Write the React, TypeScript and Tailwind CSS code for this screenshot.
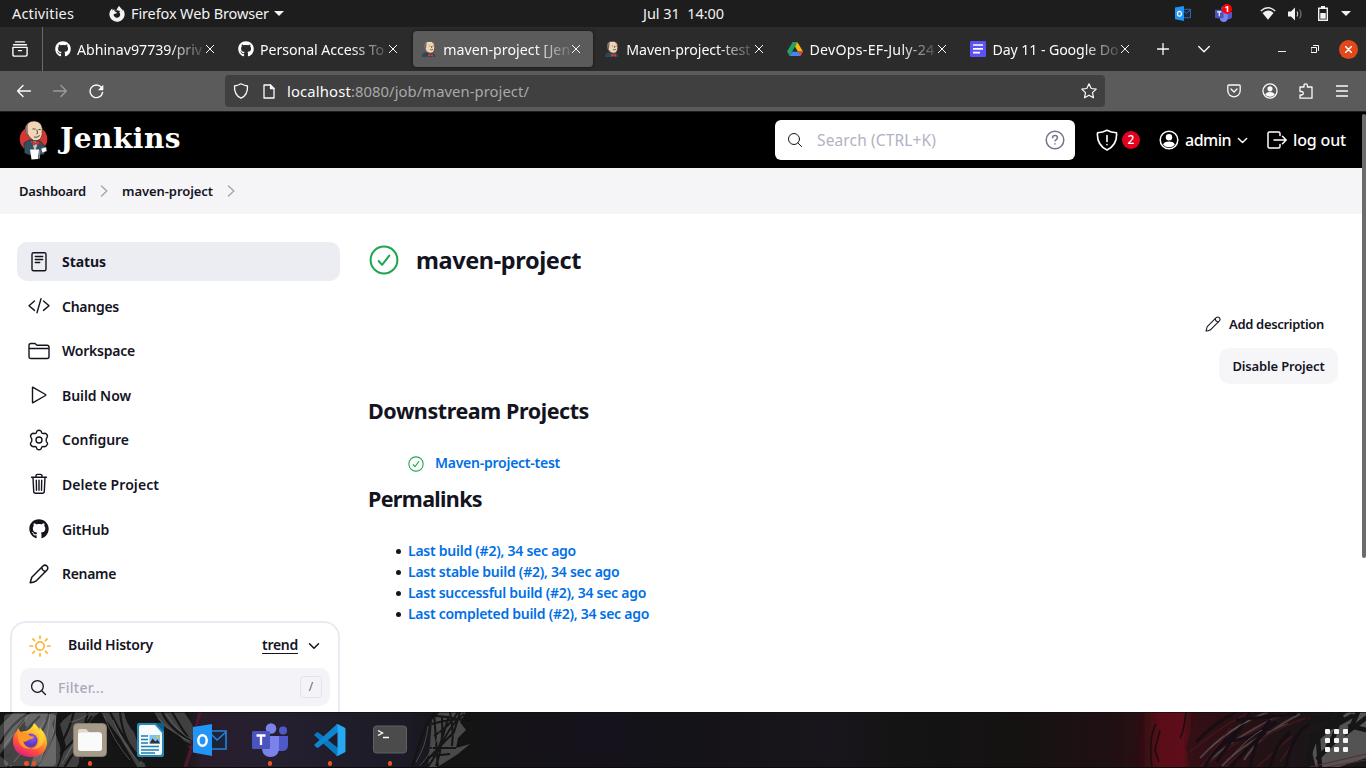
import { useLayoutEffect, useRef, type ReactNode } from "react";
import { FaFirefoxBrowser, FaGithub } from "react-icons/fa";

/** One line of text whose tracking is adjusted so that it fills a given width. */
function Fit({ w, className = "", children }: { w: number; className?: string; children: string }) {
  const ref = useRef<HTMLSpanElement>(null);
  useLayoutEffect(() => {
    const el = ref.current;
    if (!el) return;
    el.style.letterSpacing = "0px";
    const natural = el.getBoundingClientRect().width;
    el.style.letterSpacing = `${(w - natural) / children.length}px`;
  }, [w, children]);
  return (
    <span ref={ref} className={`inline-block shrink-0 whitespace-pre ${className}`}>
      {children}
    </span>
  );
}

type IconProps = { className?: string; children: ReactNode; box?: string; sw?: number };

function Line({ className = "size-4", box = "0 0 16 16", sw = 1.2, children }: IconProps) {
  return (
    <svg
      viewBox={box}
      className={`shrink-0 ${className}`}
      fill="none"
      stroke="currentColor"
      strokeWidth={sw}
      strokeLinecap="round"
      strokeLinejoin="round"
    >
      {children}
    </svg>
  );
}

const Chevron = ({ className = "", sw = 1.5 }: { className?: string; sw?: number }) => (
  <Line className={className} box="0 0 12 12" sw={sw}>
    <path d="M1.5 3.8 6 8.3l4.5-4.5" />
  </Line>
);

const Crumb = () => (
  <Line className="size-3 text-[#a5a5b8]" box="0 0 12 12" sw={1.5}>
    <path d="M3.5 1 8.8 6l-5.3 5" />
  </Line>
);

const Pencil = ({ className, sw = 1.5 }: { className: string; sw?: number }) => (
  <Line className={className} box="0 0 20 20" sw={sw}>
    <path d="M1.200 18.800 2.800 13.200 14 2q1.900-1.700 3.900 0 1.800 2 .1 4L6.800 17.200Q4.500 18.800 1.200 18.800Z" />
    <path d="m12.700 3.500q.4 3.400 3.800 3.900" />
  </Line>
);

const Person = ({ className, sw = 1.5 }: { className: string; sw?: number }) => (
  <Line className={className} box="0 0 20 20" sw={sw}>
    <circle cx="10" cy="10" r="8.800" />
    <circle cx="10" cy="7.300" r="3.200" fill="currentColor" stroke="none" />
    <path d="M4.100 14.700q1-3.300 5.900-3.300t5.900 3.300q-2.300 2.500-5.900 2.500t-5.900-2.500Z" fill="currentColor" stroke="none" />
  </Line>
);

const Magnifier = ({ className, sw = 1.2 }: { className: string; sw?: number }) => (
  <Line className={className} box="0 0 16 16" sw={sw}>
    <circle cx="7" cy="7" r="5.500" />
    <path d="m11 11 3.600 3.600" />
  </Line>
);

const Success = ({ className, sw }: { className: string; sw: number }) => (
  <Line className={`text-[#1ea64b] ${className}`} box="0 0 30 30" sw={sw}>
    <circle cx="15" cy="15" r="13.400" />
    <path d="m9.700 16 3.400 3.800 7.200-9.200" />
  </Line>
);

function JenkinsFace({ className }: { className: string }) {
  return (
    <svg viewBox="0 0 16 16" className={`shrink-0 ${className}`}>
      <path d="M1 16q0-4 3-4.500l7 .3q3 .5 3.500 4.200Z" fill="#2f4658" />
      <path d="M3.500 2.500Q6-.5 10.500.5q3.600 1.300 3.200 6-.1 5.500-4.200 5.700-3.500 0-5.500-4Z" fill="#eed5b7" stroke="#3a3230" strokeWidth=".6" />
      <path d="M3 3.200q-.5 3 1.200 6.500l1-3.500.5-4.600Z" fill="#756b63" />
      <path d="M8.200 5h1M11.500 5h1M9 8.500q1.500.8 3-.2M10.600 5v2" stroke="#493728" strokeWidth=".7" fill="none" />
      <path d="m7 12.800 2.500 1L12 12.500v3.300l-2.500-1L7 15.800Z" fill="#d33833" />
    </svg>
  );
}

function JenkinsLogo() {
  return (
    <svg viewBox="0 0 30 40" className="h-10 w-[30px] shrink-0">
      <ellipse cx="14.500" cy="19" rx="13.800" ry="13" fill="#d33833" />
      <path d="M5 23 10 20l11 1 5 5-1 8.500-15 .5-4.500-2Z" fill="#335061" stroke="#15242c" strokeWidth=".6" />
      <path d="m12 21 4 10 3.500-9Z" fill="#b9c6cf" />
      <path d="M6.500 7Q9 .8 15.500 1q7 .5 7.800 7.500.7 7-1.800 10.500-3 2.500-7 1.500-4.500-2.500-6.500-7.500-2-2.500-1.500-6Z" fill="#f0d6b7" stroke="#2c2320" strokeWidth=".7" />
      <path d="M6.600 7.300Q8 3.800 9.300 3.200q-1 4.800-.2 8.800l-.6 3q-2.400-3-1.900-7.700Z" fill="#8a8078" />
      <path d="M13.500 9h3M19.500 9.500h2.200M17.800 9.500l.8 4-1.300.6M15 17q3 1.200 5.800-1.500" stroke="#49372a" strokeWidth=".9" fill="none" />
      <path d="m12.800 21 3.700 1.900 4-2.400.3 4.500-4-1-3.700 1.700Z" fill="#d33833" stroke="#751b18" strokeWidth=".5" />
      <path d="M11 29.500h9l-1 9.500-6.500.5Z" fill="#fff" />
      <path d="M20 30q.5 4-1 8.500l1.800.3.700-8Z" fill="#7d8990" />
      <path d="m22 28.500 5-1.500.8 4-4.500 2Z" fill="#fff" stroke="#555" strokeWidth=".5" />
    </svg>
  );
}

const OutlookIcon = ({ className }: { className: string }) => (
  <svg viewBox="0 0 34 32" className={`shrink-0 ${className}`}>
    <path d="M17 7h16v18H17" fill="#1b2438" stroke="#2683dd" strokeWidth="1.600" />
    <path d="m17 9 7 7 9-8" fill="none" stroke="#2683dd" strokeWidth="1.600" />
    <path d="M0 3 19 0v32L0 28.500Z" fill="#2196f8" />
    <ellipse cx="9.500" cy="16.500" rx="4.200" ry="5.200" fill="none" stroke="#fff" strokeWidth="2.500" />
  </svg>
);

const TeamsIcon = ({ className }: { className: string }) => (
  <svg viewBox="0 0 36 34" className={`shrink-0 ${className}`}>
    <circle cx="19" cy="5.500" r="5.300" fill="#7b83eb" />
    <circle cx="31" cy="7.500" r="4" fill="#5059c9" />
    <path d="M24 13h12v9q0 6-6 6h-6Z" fill="#5059c9" />
    <path d="M10 13h17v13q-1 8-8.500 8T10 26Z" fill="#7b83eb" />
    <rect y="8" width="18" height="18" rx="1.500" fill="#4b53bc" />
    <path d="M4.500 12.500h9M9 12.500v9.500" stroke="#fff" strokeWidth="2.300" fill="none" />
  </svg>
);

const DriveIcon = () => (
  <svg viewBox="0 0 16 16" className="size-4 shrink-0">
    <path d="M5.400 1.500h5.200l5.400 9.100h-5.300Z" fill="#fbbc04" />
    <path d="M5.300 10.600H16L13.300 15H2.700Z" fill="#4285f4" />
    <path d="M10.700 10.600H16L13.300 15Z" fill="#ea4335" />
    <path d="M5.400 1.500h4.800L8.100 5.900l-2.800 4.700L2.700 15 0 10.600Z" fill="#1fa463" />
    <path d="m8 6 2.700 4.600H5.300Z" fill="#2b2b2b" />
  </svg>
);

const DocsIcon = () => (
  <svg viewBox="0 0 16 16" className="size-4 shrink-0">
    <rect width="16" height="16" rx="1.200" fill="#5b53f5" />
    <path d="M3 4h10M3 7.800h10M3 11.700h7" stroke="#fff" strokeWidth="1.700" />
  </svg>
);

const tabs = [
  { title: "Abhinav97739/priv", w: 125, icon: <FaGithub className="size-4 shrink-0 text-white" /> },
  { title: "Personal Access To", w: 124, icon: <FaGithub className="size-4 shrink-0 text-white" /> },
  { title: "maven-project [Jen", w: 127, icon: <JenkinsFace className="size-4" />, active: true },
  { title: "Maven-project-test", w: 124, icon: <JenkinsFace className="size-4" /> },
  { title: "DevOps-EF-July-24", w: 125, icon: <DriveIcon /> },
  { title: "Day 11 - Google Do", w: 126, icon: <DocsIcon /> },
];

function SystemBar() {
  return (
    <header className="flex h-[27px] items-center bg-[#1d1d1d] text-[14.500px] text-[#f2f2f2]">
      <div className="flex w-[643px] items-center pl-3">
        <Fit w={62}>Activities</Fit>
        <FaFirefoxBrowser className="ml-[35px] size-4" />
        <Fit w={138} className="ml-1.5">Firefox Web Browser</Fit>
        <svg viewBox="0 0 10 5" className="ml-[5px] h-[5px] w-2.5"><path d="M0 0h10L5 5Z" fill="currentColor" /></svg>
      </div>
      <Fit w={81}>Jul 31  14:00</Fit>
      <div className="ml-auto flex items-center pr-[15px]">
        <OutlookIcon className="mr-6 h-[15px] w-4" />
        <div className="relative mr-7 h-4 w-[17px]">
          <TeamsIcon className="h-4 w-[17px]" />
          <span className="absolute -top-0.5 right-0 flex size-2.5 items-center justify-center rounded-full bg-[#f00] text-[9px] leading-none font-bold text-white">1</span>
        </div>
        <svg viewBox="0 0 16 13" className="mr-3 h-[13px] w-4 shrink-0" fill="none">
          <path d="M.8 4Q8-2.500 15.200 4" stroke="#eee" strokeWidth="1.400" />
          <path d="M2.500 6Q8 1 13.500 6L8 12.800Z" fill="#f2f2f2" />
        </svg>
        <svg viewBox="0 0 15 14" className="mr-[15px] h-3.5 w-[15px] shrink-0" fill="none">
          <path d="M0 4.500h3L7 .5v13l-4-4H0Z" fill="#f2f2f2" />
          <path d="M9 4.500q1.600 2.500 0 5" stroke="#ccc" strokeWidth="1.200" />
          <path d="M11.500 2.500q3 4.500 0 9" stroke="#777" strokeWidth="1.200" />
        </svg>
        <svg viewBox="0 0 10 15" className="mr-[13px] h-[15px] w-2.5 shrink-0" fill="none">
          <path d="M.7 2.200h8.600v12H.7ZM3 .8h4" stroke="#f2f2f2" strokeWidth="1.400" />
          <path d="M2.300 7h5.400v5.700H2.300Z" fill="#f2f2f2" />
        </svg>
        <svg viewBox="0 0 10 5" className="h-[5px] w-2.5"><path d="M0 0h10L5 5Z" fill="currentColor" /></svg>
      </div>
    </header>
  );
}

function TabStrip() {
  return (
    <nav className="flex h-11 items-center bg-[#2b2b2b] text-[14.200px] text-[#fbfbfe]">
      <div className="flex h-full w-[43px] items-center border-r border-[#6a6a6a] pl-3">
        <Line className="size-4" box="0 0 16 16" sw={1.400}>
          <path d="M3.500.9h9M1.500 3.700h13M.9 6.400h14.200v7.200q0 1.500-1.500 1.500H2.400q-1.500 0-1.500-1.500ZM6.500 9.600h3" />
        </Line>
      </div>
      <div className="ml-1 flex gap-[3.100px]">
        {tabs.map((t) => (
          <div
            key={t.title}
            className={`flex h-9 w-[180px] items-center rounded pl-2 ${t.active ? "bg-[#5b5b5b] shadow-[0_0_3px_#111]" : ""}`}
          >
            {t.icon}
            <div className="ml-1.5 w-[127px] overflow-hidden pt-px [mask-image:linear-gradient(to_right,black_72%,transparent_104%)]">
              <Fit w={t.w}>{t.title}</Fit>
            </div>
            <Line className="ml-0.5 size-2" box="0 0 8 8" sw={1}>
              <path d="m0 0 8 8M8 0 0 8" />
            </Line>
          </div>
        ))}
      </div>
      <Line className="ml-[15px] size-3" box="0 0 12 12" sw={1.300}><path d="M6 .5v11M.5 6h11" /></Line>
      <Chevron className="ml-[28px] size-3.5" sw={1.200} />
      <div className="ml-auto flex items-center pr-2">
        <span className="mt-[5px] mr-[25px] h-px w-2 bg-[#eee]" />
        <Line className="mr-5 size-2" box="0 0 8 8" sw={1}>
          <path d="M.5 2.500h5v5h-5ZM2.500.5h5v5" />
        </Line>
        <span className="flex size-[19px] items-center justify-center rounded-full bg-[#e2491a]">
          <Line className="size-[7px]" box="0 0 8 8" sw={1.700}><path d="m.5.5 7 7m0-7-7 7" /></Line>
        </span>
      </div>
    </nav>
  );
}

function Toolbar() {
  return (
    <div className="flex h-[41px] items-center border-b border-[#1f1f1f] bg-[#5b5b5b] pl-[17px] text-[#fbfbfe]">
      <Line className="size-3.5" box="0 0 14 14" sw={1.400}><path d="M13.500 7H.8M6 1.500.6 7 6 12.500" /></Line>
      <Line className="ml-[22px] size-3.5 text-[#9a9a9a]" box="0 0 14 14" sw={1.400}><path d="M.5 7h12.700M8 1.500 13.400 7 8 12.500" /></Line>
      <Line className="ml-[22px] size-[15px]" box="0 0 15 15" sw={1.400}>
        <path d="M12.300 3.300A6.300 6.300 0 1 0 13.600 8.500" /><path d="M14.300.8v5.400H8.900Z" fill="currentColor" stroke="none" />
      </Line>
      <div className="ml-[121px] flex h-8 w-[880px] items-center rounded bg-[#404040] pr-2 pl-2">
        <Line className="h-4 w-4" sw={1.300}><path d="M8 .8q3.500 2 6.500 2.200Q15 12 8 15.200 1 12 1.500 3 4.500 2.800 8 .8Z" /></Line>
        <Line className="ml-3 h-[15px] w-4" box="0 0 16 15" sw={1.300}><path d="M3 1h6.500L13 4.500V14H3Z" /><path d="M9.500 1v3.500H13" fill="currentColor" /></Line>
        <span className="ml-2.5 flex text-[14.800px]">
          <Fit w={64}>localhost</Fit>
          <Fit w={178} className="text-[#a8a8a8]">:8080/job/maven-project/</Fit>
        </span>
        <Line className="ml-auto size-4" sw={1.200}>
          <path d="m8 .8 2.200 4.700 5 .6-3.700 3.500 1 5.200L8 12.200l-4.500 2.600 1-5.200L.8 6.100l5-.6Z" />
        </Line>
      </div>
      <div className="ml-auto flex items-center pr-[18px]">
        <Line className="size-3.5" box="0 0 14 14" sw={1.300}><path d="M1.800 1h10.400q1 0 1 1v4.500q0 3-2 4.700Q7 14.500 2.800 11.200.8 9.500.8 6.500V2q0-1 1-1ZM4 5l3 3 3-3" /></Line>
        <Person className="ml-[21px] size-4" sw={1.600} />
        <Line className="ml-5 size-4" sw={1.300}>
          <path d="M6 4V2.500q0-1.700 1.700-1.700t1.700 1.700V4H14v11.200H2V12h1.700q1.600 0 1.600-1.700T3.700 8.500H2V4h4" />
        </Line>
        <Line className="ml-[22px] h-3 w-3" box="0 0 12 12" sw={1.300}><path d="M.5 1h11M.5 6h11M.5 11h11" /></Line>
      </div>
    </div>
  );
}

function JenkinsHeader() {
  return (
    <div className="flex h-14 items-center bg-black pr-5 pl-[19px] font-medium text-white">
      <JenkinsLogo />
      <Fit w={121} className="-mt-0.5 ml-[11px] font-['DejaVu_Serif',serif] text-[28px] leading-none font-bold">Jenkins</Fit>
      <div className="ml-auto flex h-10 w-[300px] items-center rounded-md bg-white px-3">
        <Magnifier className="size-4 text-[#14141f]" sw={1} />
        <Fit w={119} className="ml-3.5 pt-px text-[15.500px] font-normal text-[#b2b2c4]">Search (CTRL+K)</Fit>
        <Line className="-mr-0.5 ml-auto size-5 text-[#73738c]" box="0 0 20 20" sw={1.500}>
          <circle cx="10" cy="10" r="8.800" />
          <path d="M7.600 7.800Q7.600 5.600 10 5.600t2.400 2.100q0 1.300-2.400 3.100M10 13.700v.2" />
        </Line>
      </div>
      <Line className="ml-[21px] h-[22px] w-[22px]" box="0 0 22 22" sw={1.600}>
        <path d="M11 1.200Q15 3.400 20.500 3.800 21.500 16 11 21 .5 16 1.500 3.800 7 3.400 11 1.200ZM11 6.500v6M11 15.600v.2" />
      </Line>
      <span className="ml-1 flex size-[18px] items-center justify-center rounded-full bg-[#e6001f] text-[12px]">2</span>
      <Person className="ml-[19px] size-5" />
      <Fit w={46} className="ml-1.5 text-[16px]">admin</Fit>
      <Chevron className="ml-1.5 size-[11px]" />
      <Line className="ml-[19px] h-5 w-5" box="0 0 20 20" sw={1.500}>
        <path d="M13 5.500V3.500Q13 2 11.500 2h-9Q1 2 1 3.500v13Q1 18 2.500 18h9q1.500 0 1.500-1.500v-2M7 10h12M15.500 6.300 19.200 10l-3.700 3.700" />
      </Line>
      <Fit w={53} className="ml-1.5 text-[16px]">log out</Fit>
    </div>
  );
}

const menu = [
  { label: "Status", w: 44, icon: <path d="M5.500 1.700h11q1.500 0 1.500 1.500v15q0 1.500-1.500 1.500h-11q-1.500 0-1.500-1.500v-15q0-1.500 1.500-1.500ZM7.300 5.500h7.400M7.300 8.500h7.400M7.300 11.500h4.400" /> },
  { label: "Changes", w: 57, icon: <path d="M6.500 6 1 10.700l5.500 4.700M15.500 6l5.500 4.700-5.500 4.700M13 3.700 9 17.700" /> },
  { label: "Workspace", w: 73, icon: <path d="M1 16.500v-11Q1 3.500 3 3.500h4l2 1.800h10q2 0 2 2v9.200q0 2-2 2H3q-2 0-2-2ZM1 8.500h20" /> },
  { label: "Build Now", w: 69, icon: <path d="M4.500 3.500v15q0 .5.600.2L17.500 11.500q.6-.5 0-1L5.100 3.300Q4.500 3 4.500 3.500Z" /> },
  {
    label: "Configure",
    w: 67,
    icon: (
      <>
        <circle cx="11" cy="11" r="3" />
        <path d="M9 2q2-1.400 4 0l.8 2q.7.800 2.500.3 2.700.2 3.200 2.700-.2 1.400-1 2.300-.7 1.700 0 3.400 1.200 1 1 2.600-1 2.400-3.400 2.400-1.600-.4-2.300.3l-.8 2q-2 1.400-4 0l-.8-2q-.7-.7-2.300-.3-2.600 0-3.400-2.400-.2-1.600 1-2.600.7-1.700 0-3.400-.8-.9-1-2.300.5-2.500 3.200-2.700 1.800.5 2.500-.3Z" />
      </>
    ),
  },
  { label: "Delete Project", w: 97, icon: <path d="M3.500 4.200h15M8 4.200V2.900q0-1.500 1.500-1.500h3Q14 1.400 14 2.900v1.300M5 4.200l.7 14q.1 2 1.800 2h7q1.700 0 1.800-2l.7-14M8.300 7.300l.2 10M11 7.300v10M13.700 7.300l-.2 10" /> },
  { label: "GitHub", w: 47, icon: null },
  { label: "Rename", w: 54, icon: null },
];

function Sidebar() {
  return (
    <aside className="w-[340px] shrink-0 pt-7 pl-2.5 text-[14px] font-[560] text-[#14141f]">
      <ul className="flex flex-col gap-[5.600px] pl-[7px]">
        {menu.map((m, i) => (
          <li key={m.label} className={`flex h-[39px] items-center rounded-[10px] pl-[11px] ${i === 0 ? "bg-[#ecedf3]" : ""}`}>
            {m.icon && <Line className="size-[22px]" box="0 0 22 22" sw={1.400}>{m.icon}</Line>}
            {m.label === "GitHub" && <FaGithub className="mx-px size-5" />}
            {m.label === "Rename" && <Pencil className="mx-px size-5" />}
            <Fit w={m.w} className={`ml-3 ${i === 0 ? "font-bold" : ""}`}>{m.label}</Fit>
          </li>
        ))}
      </ul>
      <section className="mt-7 h-[140px] rounded-[16px] border-2 border-[#eaeaf3] px-2">
        <div className="flex h-[45px] items-center pl-[9px]">
          <Line className="size-[22px] text-[#fbb53c]" box="0 0 22 22" sw={1.700}>
            <circle cx="11" cy="11" r="4.200" />
            <path d="M11 1v2.500M11 18.500V21M1 11h2.500M18.500 11H21M3.900 3.900l1.700 1.700M16.400 16.400l1.700 1.700M3.900 18.100l1.700-1.700M16.400 5.600l1.700-1.700" />
          </Line>
          <Fit w={85} className="ml-[17px] pb-0.5">Build History</Fit>
          <Fit w={36} className="mb-0.5 ml-auto border-b border-[#14141f] leading-[17px]">trend</Fit>
          <Chevron className="mr-2.5 ml-2.5 size-3" />
        </div>
        <div className="flex h-[38px] items-center rounded-[10px] bg-[#f4f4f8] pr-2 pl-2.5">
          <Magnifier className="size-[17px]" />
          <Fit w={46} className="ml-[11px] font-medium text-[#a9a9bd]">Filter...</Fit>
          <span className="ml-auto flex h-[22px] w-[22px] items-center justify-center rounded border border-[#e3e3ec] text-[12px] font-normal text-[#65657a]">/</span>
        </div>
      </section>
    </aside>
  );
}

const permalinks = [
  { text: "Last build (#2), 34 sec ago", w: 168 },
  { text: "Last stable build (#2), 34 sec ago", w: 211.5 },
  { text: "Last successful build (#2), 34 sec ago", w: 238 },
  { text: "Last completed build (#2), 34 sec ago", w: 241 },
];

function JobPage() {
  return (
    <main className="flex flex-1 flex-col pt-[31px] pr-7 pl-7 text-[14px] text-[#14141f]">
      <div className="flex h-[30px] items-center">
        <Success className="mr-[17px] ml-px size-[30px]" sw={2} />
        <Fit w={165} className="pt-0.5 text-[23.500px] font-bold">maven-project</Fit>
      </div>
      <div className="mt-[33px] flex flex-col items-end text-[13px] font-[560]">
        <div className="flex h-8 items-center pr-3.5">
          <Pencil className="mr-2 size-4" sw={1.300} />
          <Fit w={95} className="pt-px">Add description</Fit>
        </div>
        <button className="mt-2 flex h-9 w-[119px] items-center justify-center rounded-[10px] bg-[#f6f6f9]">
          <Fit w={92} className="pt-0.5">Disable Project</Fit>
        </button>
      </div>
      <h2 className="mt-3 flex h-[30px] items-center text-[21.500px] font-bold"><Fit w={221}>Downstream Projects</Fit></h2>
      <div className="mt-[27px] flex h-[21px] items-center pl-10 font-[560] text-[#006fe6]">
        <Success className="mr-[11px] size-4" sw={2} />
        <Fit w={125} className="pb-0.5">Maven-project-test</Fit>
      </div>
      <h2 className="mt-2.5 flex h-[30px] items-center text-[21.500px] font-bold"><Fit w={114}>Permalinks</Fit></h2>
      <ul className="mt-[26px] pl-7 font-[560] text-[#006fe6]">
        {permalinks.map((p) => (
          <li key={p.text} className="flex h-[21px] items-center">
            <span className="mt-px mr-[7px] size-[5px] rounded-full bg-[#14141f]" />
            <Fit w={p.w}>{p.text}</Fit>
          </li>
        ))}
      </ul>
    </main>
  );
}

/** Brush-stroke wallpaper visible behind the dock. */
function Wallpaper() {
  return (
    <svg viewBox="0 0 1366 56" preserveAspectRatio="none" className="absolute inset-0 h-full w-full">
      <defs>
        <linearGradient id="base" x1="0" x2="1">
          <stop offset="0" stopColor="#161616" />
          <stop offset=".135" stopColor="#151515" />
          <stop offset=".148" stopColor="#2a1d2c" />
          <stop offset=".2" stopColor="#242030" />
          <stop offset=".27" stopColor="#1f1c29" />
          <stop offset=".3" stopColor="#1b1a25" />
          <stop offset=".33" stopColor="#141414" />
          <stop offset=".38" stopColor="#151318" />
          <stop offset=".44" stopColor="#15121c" />
          <stop offset=".5" stopColor="#141317" />
          <stop offset=".61" stopColor="#19151c" />
          <stop offset=".66" stopColor="#141414" />
          <stop offset=".74" stopColor="#151212" />
          <stop offset=".81" stopColor="#1f1013" />
          <stop offset=".845" stopColor="#2c0f13" />
          <stop offset=".87" stopColor="#360f15" />
          <stop offset=".9" stopColor="#2a1014" />
          <stop offset=".94" stopColor="#1d1416" />
          <stop offset="1" stopColor="#191919" />
        </linearGradient>
        <linearGradient id="ember" x1="0" x2="1">
          <stop offset="0" stopColor="#3a0f14" stopOpacity="0" />
          <stop offset=".4" stopColor="#5a1119" />
          <stop offset=".8" stopColor="#5e111a" />
          <stop offset="1" stopColor="#3a0f14" stopOpacity="0" />
        </linearGradient>
        <filter id="soft"><feGaussianBlur stdDeviation=".45" /></filter>
      </defs>
      <rect width="1366" height="56" fill="url(#base)" />
      <g filter="url(#soft)">
        <g fill="#505050">
          <path d="M0 14 14 0h16Q16 14 10 30L0 42ZM24 0h34l-6 12 8 22q2 12-4 22H30l6-20-10-12Z" opacity=".8" />
          <path d="M60 12Q68 2 76 0h24Q88 8 86 20l4 14-14 22H58l8-22ZM100 0h24q2 12 10 20l12 36h-8l-18-30ZM154 0h30l8 12 4 14-4 12-14-16-16-8Z" opacity=".75" />
          <path d="M0 56V44l14 12Z" opacity=".7" />
        </g>
        <g stroke="#131313" strokeWidth="2.200" fill="none">
          <path d="M0 32Q10 12 30 0M8 56Q16 26 40 4M20 56Q40 30 50 0M36 56Q50 36 60 6M60 42Q76 28 92 4M64 56Q76 34 96 20M100 0q14 34 30 54M110 0q14 30 34 50M154 4q14 20 38 30M162 0q8 18 32 30M172 0q10 18 22 34M74 0Q70 16 62 30M88 0q-6 20-8 52M120 0q2 26 20 50M6 46q14-12 20-32" />
        </g>
        <g stroke="#777" strokeWidth=".7" fill="none" opacity=".8">
          <path d="M2 36Q16 20 28 4M14 50Q30 30 46 8M62 52Q72 34 84 12M104 4q10 26 26 44M113 8q12 28 28 44M158 6q14 16 34 24M166 2q12 18 26 26M40 50Q54 30 56 4M50 0Q48 30 38 54M70 10q12-2 20-10M66 46q8-18 22-28" />
        </g>
        <path d="M198 0h4l-6 20-3 18-6 18h-4q10-28 15-56Z" fill="#5a1830" opacity=".75" />
        <g>
          <path d="M432 8 440 0h26l-6 10 6 8-8 8-2 10 14-4-12 10-22 14h-8Z" fill="#484848" />
          <path d="M412 56Q422 20 430 6M420 56q18-20 34-36l6-20M426 56q12-10 22-50M430 4q20 0 30 4M432 12q20-6 38-4M434 24q16-10 24-24M450 0q4 18 2 34M464 2q-14 10-26 38M434 0l4 56M442 4q2 28-6 50M430 36h26M430 44l20-2" stroke="#121212" strokeWidth="2" fill="none" />
          <path d="M416 50Q426 34 428 14M420 54q12-14 20-34" stroke="#555" strokeWidth=".8" fill="none" />
        </g>
        <path d="M1140 0h56l-4 18-6 18 4 20h-56Z" fill="url(#ember)" />
        <path d="M1152 56q-4-30 4-44M1160 18l-5 20 4 12M1186 0q-2 20-6 26" stroke="#1a090c" strokeWidth="1.600" fill="none" />
        <g fill="none">
          <path d="M1200 46Q1230 14 1268 0M1204 54Q1234 24 1280 4M1222 54Q1246 28 1288 12M1244 48Q1260 22 1300 2" stroke="#4c3c40" strokeWidth="2" />
          <path d="M1190 40Q1226 10 1252 0M1210 50Q1250 20 1286 0M1224 56Q1262 20 1306 6M1280 50l30-44M1256 56l36-32M1200 56q20-24 30-40" stroke="#3c151b" strokeWidth="2" />
          <path d="M1204 56q10-20 38-40M1196 30q20-20 40-30M1230 56q16-20 36-36M1250 0q-14 24-34 50M1270 8q-14 16-20 48M1236 8q20-2 60-6M1226 30q30-4 50-20M1290 20q-16 14-20 36M1310 10q-20 16-24 46" stroke="#141113" strokeWidth="3" />
          <path d="M1210 36q20-18 40-28M1232 44q16-18 30-26" stroke="#625559" strokeWidth=".9" />
        </g>
        <path d="m1312 40 8-18 14-12 14-10h18v46l-30 10h-20Z" fill="#525252" />
        <path d="m1306 56 8-28 26-22M1320 56l-2-30 24-20M1312 24q20-8 40-20M1318 46l16-16M1340 0q-2 20-12 34M1366 6l-16 12 8-18M1308 10l24-6M1330 16l14-8M1350 14l16 4" stroke="#141414" strokeWidth="4.500" fill="none" strokeLinecap="round" />
        <path d="m1310 55 56-13M1322 56l44-8" stroke="#5c2b30" strokeWidth="1.200" />
      </g>
      <rect width="1366" height="1" fill="#0d0d0d" opacity=".6" />
      <rect y="55" width="1366" height="1" fill="#0c0c0c" />
    </svg>
  );
}

const FirefoxLogo = () => (
  <svg viewBox="0 0 36 36" className="size-9">
    <defs>
      <linearGradient id="ffx" x1=".8" y1="0" x2=".25" y2="1">
        <stop offset="0" stopColor="#fff44f" /><stop offset=".35" stopColor="#ffb224" />
        <stop offset=".65" stopColor="#ff5a36" /><stop offset="1" stopColor="#e31587" />
      </linearGradient>
      <radialGradient id="globe" cx=".6" cy=".3"><stop offset="0" stopColor="#9059ff" /><stop offset="1" stopColor="#5b3bc0" /></radialGradient>
    </defs>
    <path d="M22 1q4 3 5 8 1-1 1-3 7 7 7 15-1 14-17 14Q3 34 1 21 0 13 5 9l1-3 2.500 4q3-1 5.500-1 3-1 5-3 2-2 3-5Z" fill="url(#ffx)" />
    <path d="M22 2q6 8 5 16-1 8-8 9 9 1 13-7 2-8-4-14Q24 5 22 2Z" fill="#ffdc3e" opacity=".6" />
    <circle cx="18.500" cy="18.500" r="7" fill="url(#globe)" />
    <path d="M6 8q3 3 8 3 3 1 4 3 4 0 4 1.500-2 2-5 2-3 3-6 2 1 5 8 7-9 1-12-6-2-7-1-12.500Z" fill="#ff9626" />
  </svg>
);

const FilesLogo = () => (
  <svg viewBox="0 0 36 36" className="size-9">
    <rect x="1.500" y="1.500" width="33" height="33" rx="4" fill="#a59b88" stroke="#857c6b" />
    <path d="M6 9q0-2 2-2h6l3 3h10q2 0 2 2v6H6Z" fill="#ded9cf" />
    <rect x="6" y="10.500" width="24" height="18.500" rx="2.500" fill="#fafafa" />
  </svg>
);

const WriterLogo = () => (
  <svg viewBox="0 0 36 36" className="size-9">
    <path d="M7 1h17l8 8v24q0 2-2 2H7q-2 0-2-2V3q0-2 2-2Z" fill="#2489b5" />
    <path d="M24 1h8v9Z" fill="#0c5f8e" />
    <path d="M9 3h14l7 8v20q0 2-2 2H9q-2 0-2-2V5q0-2 2-2Z" fill="#f7fbfd" />
    <path d="M9 14h7M9 17.500h7M9 21h7M9 24.500h18M9 28h18M9 31h14" stroke="#1d7fae" strokeWidth="1.400" />
    <rect x="17.500" y="13" width="10.500" height="8.500" fill="#79c5ed" />
    <path d="m17.500 21.500 3-5 3 3 2-2 2.500 4Z" fill="#333" /><circle cx="25.500" cy="15" r="1.300" fill="#f6c31c" />
  </svg>
);

const CodeLogo = () => (
  <svg viewBox="0 0 34 34" className="size-[34px]">
    <path d="M1.500 11.500 3.500 9.500q1-.7 2 0L25 25v7.500q-1 .5-2-.5L1.500 12.500Q1 12 1.500 11.500Z" fill="#0a78c2" />
    <path d="M1.500 22.500 3.500 24.500q1 .7 2 0L25 9V1.500q-1-.5-2 .5L1.500 21.500Q1 22 1.500 22.500Z" fill="#0f86d0" />
    <path d="m24.500 1 7 3.500q1 .5 1 1.500v22q0 1-1 1.500l-7 3.500q-1 .3-1.500-.3l1.500-.7V2L23 1.300q.5-.6 1.500-.3Z" fill="#27a8f2" />
  </svg>
);

const TerminalLogo = () => (
  <svg viewBox="0 0 36 36" className="size-9">
    <rect x="1.500" y="4" width="33" height="27" rx="3" fill="#4b4b4b" stroke="#616161" />
    <path d="m6 8.500 4.500 2.500L6 13.500M11 15.500h6" stroke="#fff" strokeWidth="1.400" fill="none" />
  </svg>
);

const apps = [
  { name: "firefox", icon: <FirefoxLogo />, dots: 2 },
  { name: "files", icon: <FilesLogo />, dots: 1 },
  { name: "writer", icon: <WriterLogo />, dots: 0 },
  { name: "outlook", icon: <OutlookIcon className="h-8 w-[34px]" />, dots: 0 },
  { name: "teams", icon: <TeamsIcon className="h-[34px] w-9" />, dots: 1 },
  { name: "code", icon: <CodeLogo />, dots: 1 },
  { name: "terminal", icon: <TerminalLogo />, dots: 1 },
];

function Dock() {
  return (
    <footer className="relative h-14 overflow-hidden">
      <Wallpaper />
      <div className="relative flex h-full items-center gap-2 pl-1">
        {apps.map((a, i) => (
          <div key={a.name} className={`flex h-[52px] w-[52px] flex-col items-center rounded ${i === 0 ? "bg-white/20" : ""}`}>
            <span className="flex h-[49px] items-center justify-center pt-[3px]">{a.icon}</span>
            <span className="-mt-0.5 flex gap-[3px]">
              {Array.from({ length: a.dots }, (_, d) => (
                <i key={d} className="size-[4.500px] rounded-full bg-[#e95420]" />
              ))}
            </span>
          </div>
        ))}
        <div className="mr-[18px] ml-auto grid grid-cols-3 gap-1">
          {Array.from({ length: 9 }, (_, d) => (
            <i key={d} className="size-[5px] rounded-[1px] bg-[#f5f5f5]" />
          ))}
        </div>
      </div>
    </footer>
  );
}

export default function App() {
  return (
    <div className="flex h-[768px] w-[1366px] flex-col overflow-hidden bg-white font-['Noto_Sans','Open_Sans',sans-serif]">
      <SystemBar />
      <TabStrip />
      <Toolbar />
      <div className="relative flex h-[600px] flex-col overflow-hidden">
        <JenkinsHeader />
        <div className="flex h-[46px] shrink-0 items-center bg-[#f5f5f8] pl-[19px] text-[13px] font-[560] text-[#14141f]">
          <Fit w={67} className="pt-0.5">Dashboard</Fit>
          <span className="mx-3"><Crumb /></span>
          <Fit w={91} className="pt-0.5">maven-project</Fit>
          <span className="mx-3"><Crumb /></span>
        </div>
        <div className="flex min-h-0 flex-1 overflow-hidden">
          <Sidebar />
          <JobPage />
        </div>
        <div className="absolute top-0.5 right-0 h-[444px] w-1 rounded-sm bg-[#6b6b6b]" />
      </div>
      <Dock />
    </div>
  );
}
